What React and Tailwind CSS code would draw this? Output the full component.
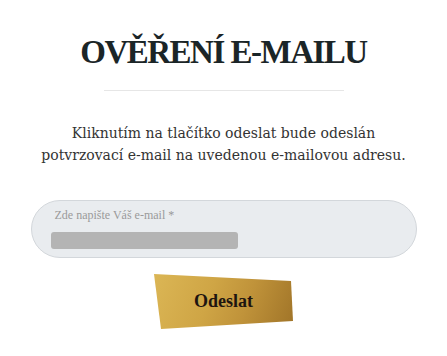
export default function App() {
  return (
    <div className="w-[447px] h-[356px] bg-white overflow-hidden flex flex-col items-center" >
      <h1 className="mt-[32px] text-[33px] leading-[40px] font-bold tracking-[-1.5px] text-[#1b2527]" style={{ fontFamily: '"Liberation Serif", serif' }}>
        OVĚŘENÍ E-MAILU
      </h1>
      <div className="mt-[18px] w-[240px] h-px bg-[#e6e6e6]" />
      <p className="mt-[31px] text-center text-[14px] leading-[22px] text-[#333]" style={{ fontFamily: '"DejaVu Serif", serif' }}>
        Kliknutím na tlačítko odeslat bude odeslán
        <br />
        potvrzovací e-mail na uvedenou e-mailovou adresu.
      </p>
      <div className="mt-[34px] w-[386px] h-[58px] rounded-full border border-[#d3d7db] bg-[#e9ecef] pl-[19px] pt-[6px] flex flex-col items-start">
        <span className="ml-[4px] text-[12px] leading-[16px] text-[#9a9a9a]" style={{ fontFamily: '"Liberation Serif", serif' }}>
          Zde napište Váš e-mail *
        </span>
        <div className="mt-[9px] w-[187px] h-[17px] rounded-[3px] bg-[#b4b4b4]" />
      </div>
      <button className="mt-[16px] w-[139px] h-[55px] flex items-center justify-center text-[18px] font-bold text-[#1e1510] bg-[linear-gradient(110deg,#dbb655_0%,#cfa545_40%,#c0933a_65%,#a07428_100%)] [clip-path:polygon(0_0,137px_7px,139px_47px,7px_55px)]" style={{ fontFamily: '"Liberation Serif", serif' }}>
        Odeslat
      </button>
    </div>
  );
}
